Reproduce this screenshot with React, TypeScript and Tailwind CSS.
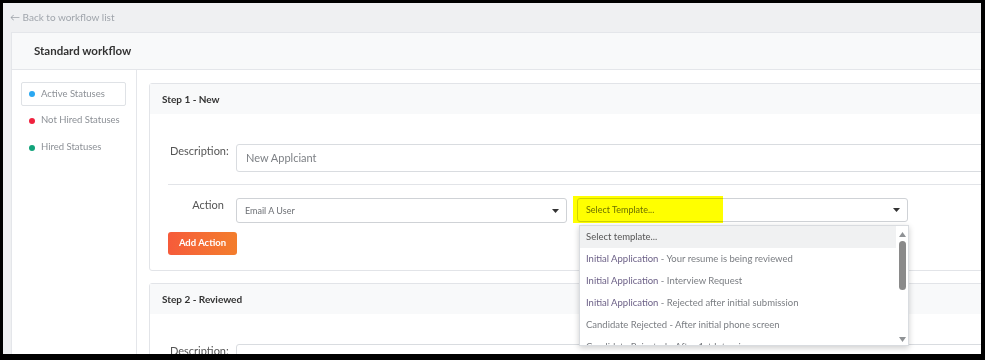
import React from "react";

const Caret = () => (
  <svg width="7" height="4" viewBox="0 0 7 4" className="shrink-0">
    <path d="M0 0h7L3.5 4z" fill="#333" />
  </svg>
);

const templates = [
  ["Initial Application", "Your resume is being reviewed"],
  ["Initial Application", "Interview Request"],
  ["Initial Application", "Rejected after initial submission"],
  ["Candidate Rejected", "After initial phone screen"],
  ["Candidate Rejected", "After 1st Interview"],
];

const Sidebar = () => (
  <div className="w-[125px] shrink-0 border-r border-[#e4e6ea] pt-[12px] pl-[9px] pr-[10px] text-[9.5px] text-[#8c9096]">
    <div className="h-[24px] flex items-center gap-[6px] pl-[7px] border border-[#dfe2e6] rounded-[2px] bg-white">
      <span className="w-[6px] h-[6px] rounded-full bg-[#2aa8f2]" />
      Active Statuses
    </div>
    <div className="h-[27px] flex items-center gap-[6px] pl-[8px] mt-[1px]">
      <span className="w-[6px] h-[6px] rounded-full bg-[#f0213e]" />
      Not Hired Statuses
    </div>
    <div className="h-[27px] flex items-center gap-[6px] pl-[8px]">
      <span className="w-[6px] h-[6px] rounded-full bg-[#11a37a]" />
      Hired Statuses
    </div>
  </div>
);

const TemplateDropdown = () => (
  <div className="absolute left-[2px] top-[27px] w-[330px] h-[121px] bg-white border border-[#d9dce0] shadow-[0_2px_6px_rgba(0,0,0,0.2)] z-10 overflow-hidden">
    <div className="flex h-full">
      <div className="flex-1 text-[9.5px]">
        <div className="h-[22px] flex items-center pl-[6px] bg-[#f0f1f2] text-[#555]">Select template...</div>
        {templates.map(([a, b], i) => (
          <div key={i} className="h-[22px] flex items-center pl-[6px] text-[#7a7d82] whitespace-nowrap">
            <span className={i < 3 ? "text-[#6b5f86]" : ""}>{a}</span>
            <span>&nbsp;- {b}</span>
          </div>
        ))}
      </div>
      <div className="w-[12px] flex flex-col items-center pt-[6px]">
        <svg width="7" height="5" viewBox="0 0 7 5"><path d="M0 5h7L3.5 0z" fill="#8f9295" /></svg>
        <div className="w-[7px] h-[49px] rounded-[4px] bg-[#8a8a8a] mt-[4px]" />
        <div className="flex-1" />
        <svg width="7" height="5" viewBox="0 0 7 5" className="mb-[3px]"><path d="M0 0h7L3.5 5z" fill="#8f9295" /></svg>
      </div>
    </div>
  </div>
);

const StepOne = () => (
  <div className="w-[860px] border border-[#e2e4e8] rounded-[3px] bg-white">
    <div className="h-[30px] bg-[#f8f9fa] flex items-center pl-[12px] text-[10px] font-bold text-[#333]">
      Step 1 - New
    </div>
    <div className="pl-[18px] pt-[30px] pb-[15px]">
      <div className="flex gap-[11px]">
        <div className="w-[57px] pl-[2px] text-[11px] leading-[14px] text-[#555]">Description:</div>
        <div className="flex-1 h-[28px] border border-[#d9dce0] rounded-[3px] flex items-center pl-[9px] text-[11px] text-[#7d8085]">
          New Applciant
        </div>
      </div>
      <div className="h-px bg-[#e2e4e8] mt-[12px] mb-[13px]" />
      <div className="flex gap-[11px]">
        <div className="w-[57px] pr-[1px] text-right text-[11px] leading-[14px] text-[#555]">Action</div>
        <div className="w-[331px] h-[25px] border border-[#cfd2d6] rounded-[3px] flex items-center justify-between pl-[8px] pr-[7px] text-[9px] text-[#6c6f74]">
          Email A User
          <Caret />
        </div>
        <div className="relative ml-[-1px]">
          <div className="w-[331px] h-[24px] border border-[#cfd2d6] rounded-[3px] flex items-center justify-between pl-[8px] pr-[7px] text-[9px] text-[#6c6f74]">
            Select Template...
            <Caret />
          </div>
          <div className="absolute left-[-4px] top-[-2px] w-[150px] h-[27px] bg-[#ffff00] mix-blend-multiply" />
          <TemplateDropdown />
        </div>
      </div>
      <button className="mt-[9px] w-[69px] h-[23px] rounded-[3px] bg-gradient-to-r from-[#f65b3a] to-[#f37d2c] text-white text-[9.5px] font-bold">
        Add Action
      </button>
    </div>
  </div>
);

const StepTwo = () => (
  <div className="w-[860px] mt-[12px] border border-[#e2e4e8] rounded-[3px] bg-white">
    <div className="h-[30px] bg-[#f8f9fa] flex items-center pl-[12px] text-[10px] font-bold text-[#333]">
      Step 2 - Reviewed
    </div>
    <div className="pl-[18px] pt-[30px]">
      <div className="flex gap-[11px]">
        <div className="w-[57px] pl-[2px] text-[11px] leading-[14px] text-[#555]">Description:</div>
        <div className="flex-1 h-[28px] border border-[#d9dce0] rounded-[3px]" />
      </div>
    </div>
  </div>
);

export default function App() {
  return (
    <div className="w-[985px] h-[362px] bg-white">
      <div className="h-[360px] border-black border-l-[3px] border-t-[3px] border-r-[4px] border-b-[6px] overflow-hidden bg-[#eff0f2] font-['Lato',sans-serif]">
        <div className="h-[29px] flex items-center pl-[7px] text-[10px] text-[#a0a5ac]">
          ← Back to workflow list
        </div>
        <div className="ml-[8px] h-[400px] bg-white border-t border-l border-[#e4e6ea]">
          <div className="h-[37px] bg-[#f8f9fa] border-b border-[#e4e6ea] flex items-center pl-[22px] text-[11.5px] font-bold text-[#333]">
            Standard workflow
          </div>
          <div className="flex h-full">
            <Sidebar />
            <div className="pl-[12px] pt-[13px] min-w-0">
              <StepOne />
              <StepTwo />
            </div>
          </div>
        </div>
      </div>
    </div>
  );
}
